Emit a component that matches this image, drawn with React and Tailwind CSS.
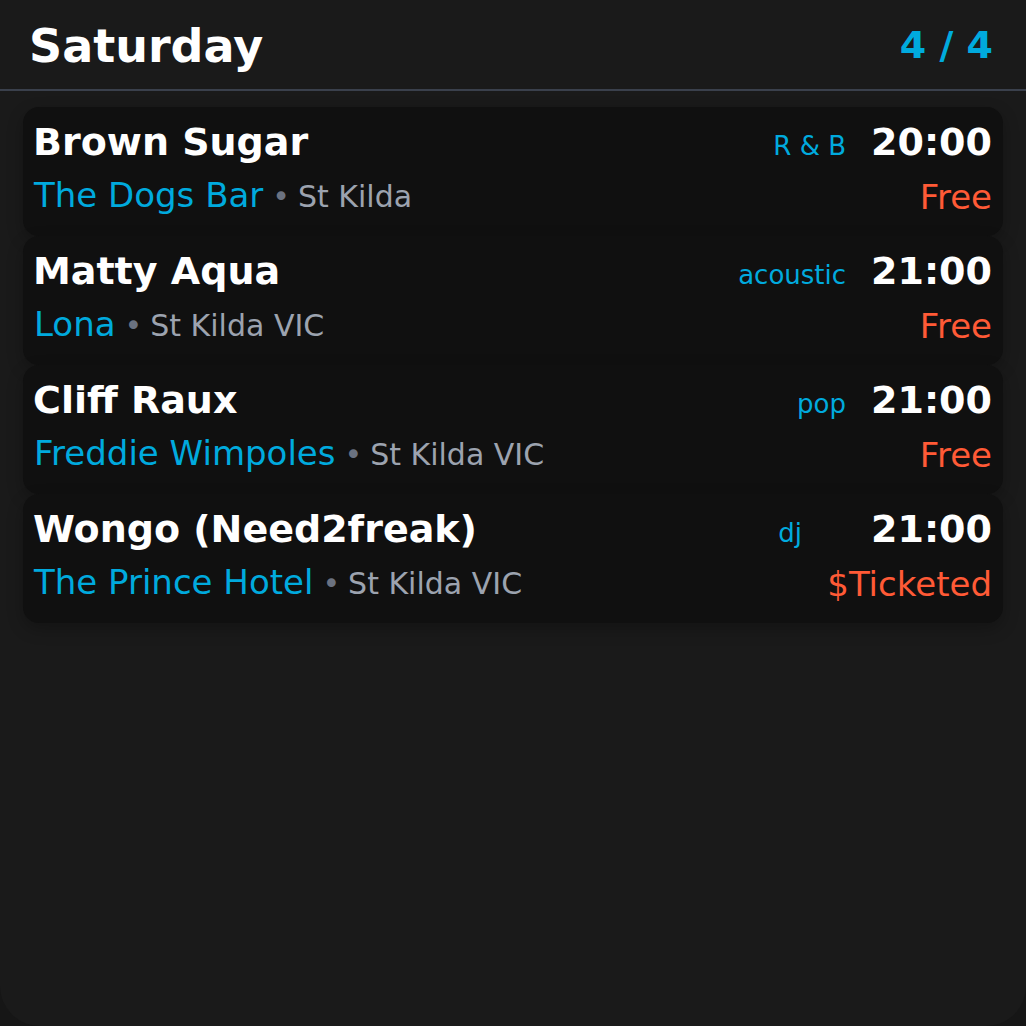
import React from "react";

const gigs = [
  {
    artist: "Brown Sugar",
    genre: "R & B",
    genreClass: "mr-[25px]",
    time: "20:00",
    venue: "The Dogs Bar",
    suburb: "St Kilda",
    price: "Free",
  },
  {
    artist: "Matty Aqua",
    genre: "acoustic",
    genreClass: "mr-[25px]",
    time: "21:00",
    venue: "Lona",
    suburb: "St Kilda VIC",
    price: "Free",
  },
  {
    artist: "Cliff Raux",
    genre: "pop",
    genreClass: "mr-[25px]",
    time: "21:00",
    venue: "Freddie Wimpoles",
    suburb: "St Kilda VIC",
    price: "Free",
  },
  {
    artist: "Wongo (Need2freak)",
    genre: "dj",
    genreClass: "mr-[69px]",
    time: "21:00",
    venue: "The Prince Hotel",
    suburb: "St Kilda VIC",
    price: "$Ticketed",
  },
];

function GigCard({ gig }) {
  return (
    <div className="h-[129px] bg-[#101010] rounded-[16px] pl-[10px] pr-[11px] pt-[16px] shadow-[0_6px_16px_rgba(0,0,0,0.25)]">
      {/* nome + genere + ora */}
      <div className="flex items-baseline leading-none">
        <span className="flex-1 text-[38px] font-bold text-white whitespace-nowrap">
          {gig.artist}
        </span>
        <span className={`text-[26px] text-[#00aade] ${gig.genreClass}`}>
          {gig.genre}
        </span>
        <span className="text-[38px] font-bold text-white">{gig.time}</span>
      </div>

      {/* locale + prezzo */}
      <div className="flex items-start mt-[17px] leading-none">
        <div className="flex-1 flex items-baseline whitespace-nowrap pl-[1px]">
          <span className="text-[34px] text-[#00aade]">{gig.venue}</span>
          <span className="text-[30px] text-[#6b7280] ml-[9px] mr-[8px]">•</span>
          <span className="text-[30px] text-[#9ca3af]">{gig.suburb}</span>
        </div>
        <span className="text-[34px] text-[#ff5a36] mt-[2px]">{gig.price}</span>
      </div>
    </div>
  );
}

export default function App() {
  return (
    <div className="w-[1026px] h-[1026px] bg-[#161616] font-['DejaVu_Sans',sans-serif]">
      <div className="h-full bg-[#1a1a1a] rounded-b-[40px] overflow-hidden">
        {/* header */}
        <header className="h-[91px] flex items-start justify-between pl-[29px] pr-[33px] border-b-2 border-[#3a404c] leading-none">
          <h1 className="text-[46px] font-bold text-white mt-[23px]">Saturday</h1>
          <span className="text-[38px] font-bold text-[#00aade] mt-[26px]">
            4 / 4
          </span>
        </header>

        <main className="px-[23px] pt-[16px]">
          {gigs.map((g, i) => (
            <GigCard key={i} gig={g} />
          ))}
        </main>
      </div>
    </div>
  );
}
